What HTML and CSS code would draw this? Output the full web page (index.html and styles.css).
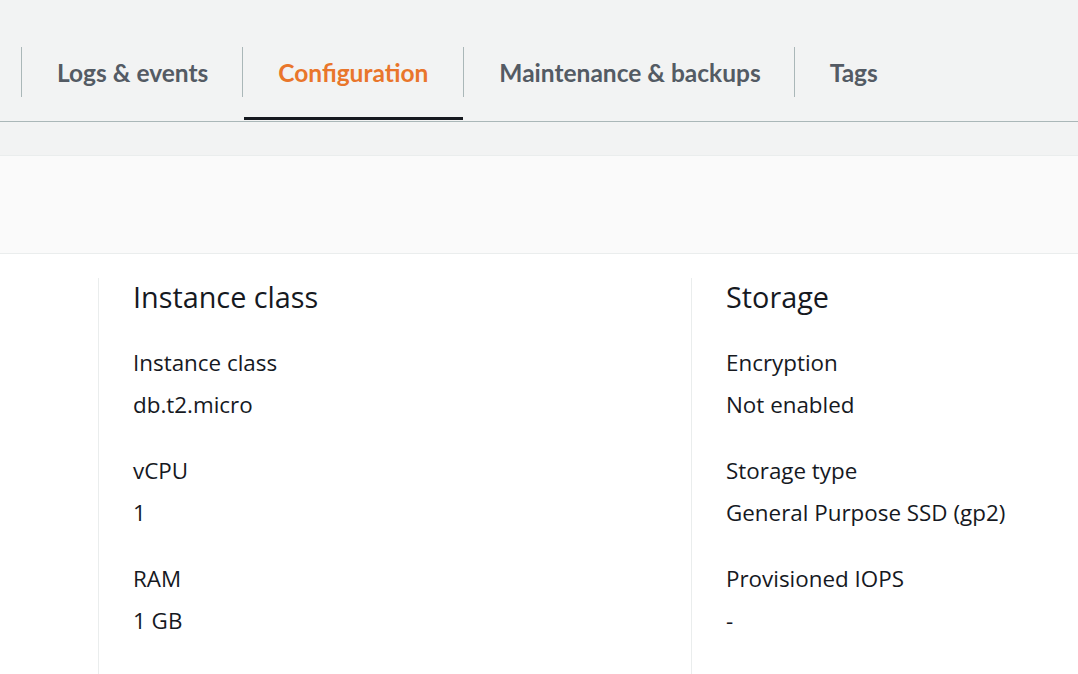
FILE: index.html
```html
<!DOCTYPE html>
<html lang="en">
<head>
<meta charset="utf-8">
<title>Configuration</title>
<link rel="stylesheet" href="styles.css">
</head>
<body>
<div class="page">
  <nav class="tabs">
    <div class="tab"><span class="tab-label">Logs &amp; events</span></div>
    <div class="tab tab-active"><span class="tab-label tab-label-wide">Configuration</span><span class="tab-underline"></span></div>
    <div class="tab"><span class="tab-label tab-label-narrow">Maintenance &amp; backups</span></div>
    <div class="tab"><span class="tab-label">Tags</span></div>
  </nav>
  <div class="spacer"></div>
  <div class="band"></div>
  <main class="content">
    <section class="column">
      <h2 class="column-title">Instance class</h2>
      <div class="field">
        <div class="field-label">Instance class</div>
        <div class="field-value">db.t2.micro</div>
      </div>
      <div class="field">
        <div class="field-label">vCPU</div>
        <div class="field-value">1</div>
      </div>
      <div class="field">
        <div class="field-label">RAM</div>
        <div class="field-value">1 GB</div>
      </div>
    </section>
    <section class="column">
      <h2 class="column-title">Storage</h2>
      <div class="field">
        <div class="field-label">Encryption</div>
        <div class="field-value">Not enabled</div>
      </div>
      <div class="field">
        <div class="field-label">Storage type</div>
        <div class="field-value">General Purpose SSD (gp2)</div>
      </div>
      <div class="field">
        <div class="field-label">Provisioned IOPS</div>
        <div class="field-value">-</div>
      </div>
    </section>
  </main>
</div>
</body>
</html>
```
FILE: styles.css
```css
html, body {
  margin: 0;
  padding: 0;
  height: 100%;
  overflow: hidden;
  background: #ffffff;
}

.page {
  width: 1078px;
  height: 674px;
  background: #f2f3f3;
  display: flex;
  flex-direction: column;
  font-family: "Open Sans", "Liberation Sans", sans-serif;
  color: #16191f;
}

/* ---------- tabs ---------- */
.tabs {
  display: flex;
  align-items: flex-start;
  height: 74px;
  padding: 47px 0 0 21px;
  border-bottom: 1px solid #aab7b8;
  flex: none;
}

.tab {
  position: relative;
  height: 74px;
  display: flex;
  flex-direction: column;
}

.tab-label {
  display: flex;
  align-items: center;
  height: 50px;
  padding: 0 34px 0 35px;
  border-left: 1px solid #aab7b8;
  font-family: "Lato", "Open Sans", sans-serif;
  font-weight: 700;
  font-size: 24.5px;
  color: #545b64;
  white-space: nowrap;
}

.tab-label-wide {
  padding-right: 35px;
}

.tab-label-narrow {
  padding-right: 33px;
}

.tab-active .tab-label {
  color: #e9762b;
}

.tab-underline {
  position: absolute;
  left: 2px;
  right: 0;
  bottom: 1px;
  height: 3px;
  background: #16191f;
}

/* ---------- header band ---------- */
.spacer {
  height: 33px;
  flex: none;
}

.band {
  height: 97px;
  flex: none;
  background: #fafafa;
  border-top: 1px solid #eaeded;
  border-bottom: 1px solid #eaeded;
}

/* ---------- content ---------- */
.content {
  flex: 1;
  background: #ffffff;
  display: grid;
  grid-template-columns: 593px 593px;
  padding: 24px 0 0 98px;
  overflow: hidden;
}

.column {
  border-left: 1px solid #eaeded;
  padding: 3px 0 0 34px;
}

.column-title {
  margin: 0 0 34px;
  font-size: 28.8px;
  line-height: 32px;
  font-weight: 400;
}

.field {
  margin-bottom: 34px;
}

.field-label,
.field-value {
  font-size: 22.4px;
  line-height: 32px;
  white-space: nowrap;
}

.field-label {
  margin-bottom: 10px;
}
```
